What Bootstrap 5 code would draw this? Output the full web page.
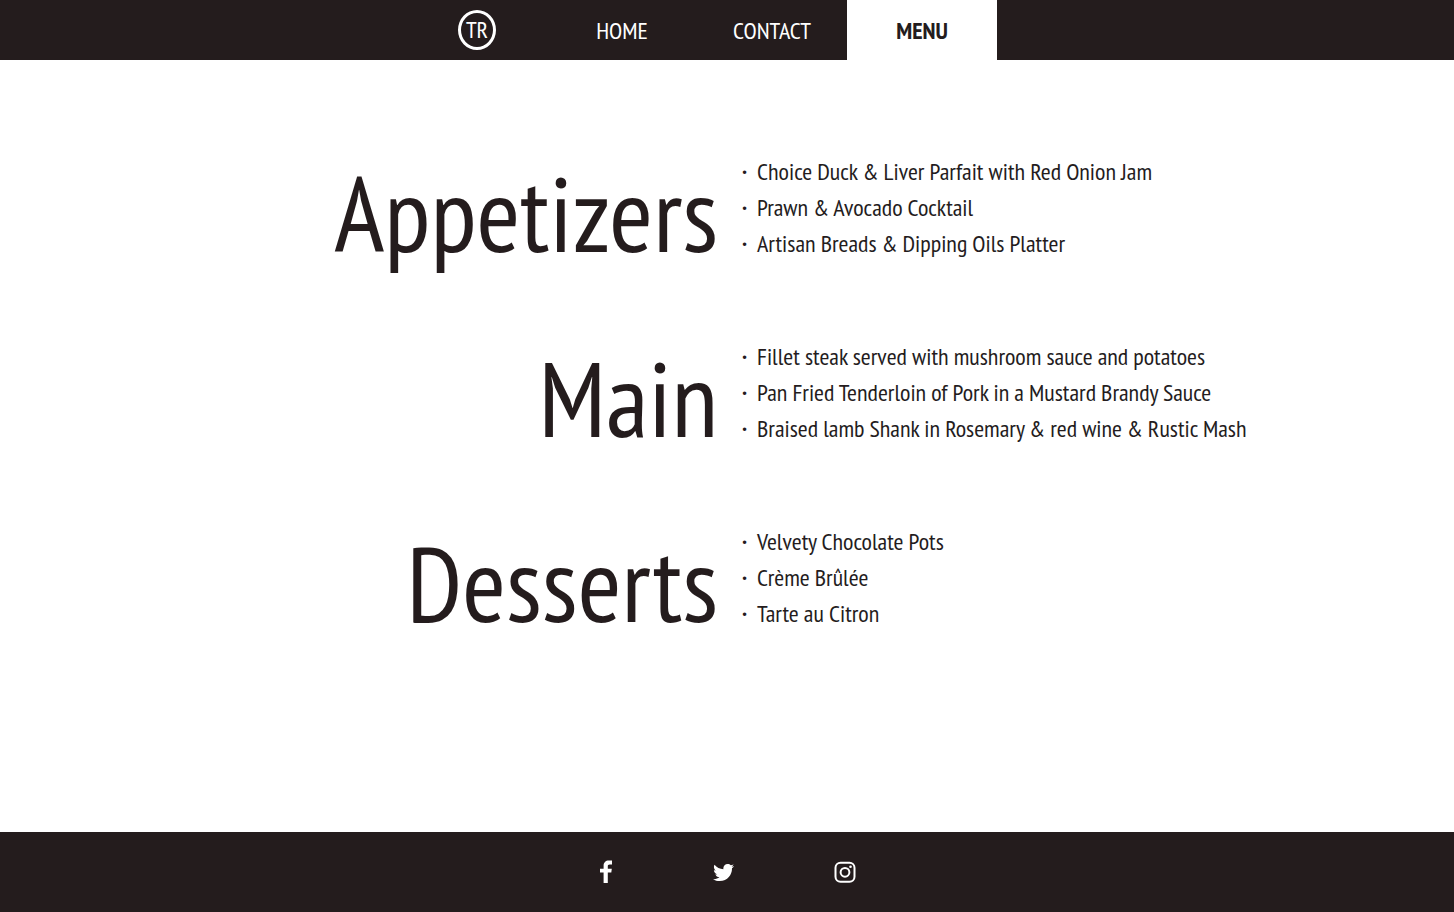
<!DOCTYPE html>
<html lang="en">
<head>
<meta charset="utf-8">
<meta name="viewport" content="width=device-width, initial-scale=1">
<title>Menu</title>
<link href="https://cdn.jsdelivr.net/npm/bootstrap@5.3.0/dist/css/bootstrap.min.css" rel="stylesheet">
<style>
  :root { --ink: #241c1d; }
  body { font-family: "PT Sans Narrow", "Open Sans", sans-serif; font-size: 24px; line-height: 36px; color: var(--ink); background: #fff; }
  .site-bar, .site-foot { background: var(--ink); }
  .site-bar { height: 60px; padding-right: 50px; }
  .site-bar a { width: 150px; color: #fff; text-decoration: none; padding-top: 2px; }
  .site-bar a.site-logo { width: 140px; padding-top: 0; }
  .site-bar a.current { background: #fff; color: var(--ink); font-weight: 700; }
  .logo-ring { width: 38px; height: 40px; border: 3px solid #fff; border-radius: 50%; }
  main { padding-top: 89px; }
  .course { margin-bottom: 58px; }
  .course h2 { font-size: 106px; line-height: 127px; font-weight: 400; padding-right: 9px; }
  .course ul { list-style-type: "·  "; padding-left: 30px; padding-top: 5px; }
  .course li::marker { font-weight: 700; }
  .site-foot { height: 80px; gap: 98px; }
  .site-foot svg { display: block; fill: #fff; }
</style>
</head>
<body class="d-flex flex-column min-vh-100">
<header>
  <nav class="site-bar d-flex justify-content-center align-items-stretch" aria-label="Main">
    <a href="#" class="site-logo d-flex align-items-center justify-content-center"><span class="logo-ring d-flex align-items-center justify-content-center">TR</span></a>
    <a href="#" class="d-flex align-items-center justify-content-center">HOME</a>
    <a href="#" class="d-flex align-items-center justify-content-center">CONTACT</a>
    <a href="#" class="current d-flex align-items-center justify-content-center" aria-current="page">MENU</a>
  </nav>
</header>
<main class="flex-grow-1">
  <section class="course row g-0">
    <div class="col-6 text-end"><h2 class="mb-0">Appetizers</h2></div>
    <div class="col-6"><ul class="mb-0">
      <li>Choice Duck &amp; Liver Parfait with Red Onion Jam</li>
      <li>Prawn &amp; Avocado Cocktail</li>
      <li>Artisan Breads &amp; Dipping Oils Platter</li>
    </ul></div>
  </section>
  <section class="course row g-0">
    <div class="col-6 text-end"><h2 class="mb-0">Main</h2></div>
    <div class="col-6"><ul class="mb-0">
      <li>Fillet steak served with mushroom sauce and potatoes</li>
      <li>Pan Fried Tenderloin of Pork in a Mustard Brandy Sauce</li>
      <li>Braised lamb Shank in Rosemary &amp; red wine &amp; Rustic Mash</li>
    </ul></div>
  </section>
  <section class="course row g-0">
    <div class="col-6 text-end"><h2 class="mb-0">Desserts</h2></div>
    <div class="col-6"><ul class="mb-0">
      <li>Velvety Chocolate Pots</li>
      <li>Crème Brûlée</li>
      <li>Tarte au Citron</li>
    </ul></div>
  </section>
</main>
<footer class="site-foot d-flex justify-content-center align-items-center">
  <a href="#" aria-label="Facebook"><svg width="16" height="24" viewBox="0 0 16 24"><path d="M14 .6v3.800h-2.200c-1.600 0-2 .7-2 1.900v2.400h4l-.5 3.700H9.800V23H5.600V12.400H2V8.700h3.600V5.600C5.600 2.400 7.600.4 10.800.4c1.400 0 2.700.1 3.200.2z"/></svg></a>
  <a href="#" aria-label="Twitter"><svg width="24" height="24" viewBox="0 0 512 512"><path d="M459.370 151.716c.325 4.548.325 9.097.325 13.645 0 138.720-105.583 298.558-298.558 298.558-59.452 0-114.680-17.219-161.137-47.106 8.447.974 16.568 1.299 25.340 1.299 49.055 0 94.213-16.568 130.274-44.832-46.132-.975-84.792-31.188-98.112-72.772 6.498.974 12.995 1.624 19.818 1.624 9.421 0 18.843-1.300 27.614-3.573-48.081-9.747-84.143-51.980-84.143-102.985v-1.299c13.969 7.797 30.214 12.670 47.431 13.319-28.264-18.843-46.781-51.005-46.781-87.391 0-19.492 5.197-37.360 14.294-52.954 51.655 63.675 129.300 105.258 216.365 109.807-1.624-7.797-2.599-15.918-2.599-24.040 0-57.828 46.782-104.934 104.934-104.934 30.213 0 57.502 12.670 76.670 33.137 23.715-4.548 46.456-13.320 66.599-25.340-7.798 24.366-24.366 44.833-46.132 57.827 21.117-2.273 41.584-8.122 60.426-16.243-14.292 20.791-32.161 39.308-52.628 54.253z" transform="translate(22 42) scale(.88)"/></svg></a>
  <a href="#" aria-label="Instagram"><svg width="22" height="22" viewBox="0 0 22 22"><rect x="1.500" y="1.800" width="19" height="19" rx="5" fill="none" stroke="#fff" stroke-width="2"/><circle cx="11" cy="11.300" r="4.400" fill="none" stroke="#fff" stroke-width="2"/><circle cx="16.500" cy="5.800" r="1.300"/></svg></a>
</footer>
<script src="https://cdn.jsdelivr.net/npm/bootstrap@5.3.0/dist/js/bootstrap.bundle.min.js"></script>
</body>
</html>
